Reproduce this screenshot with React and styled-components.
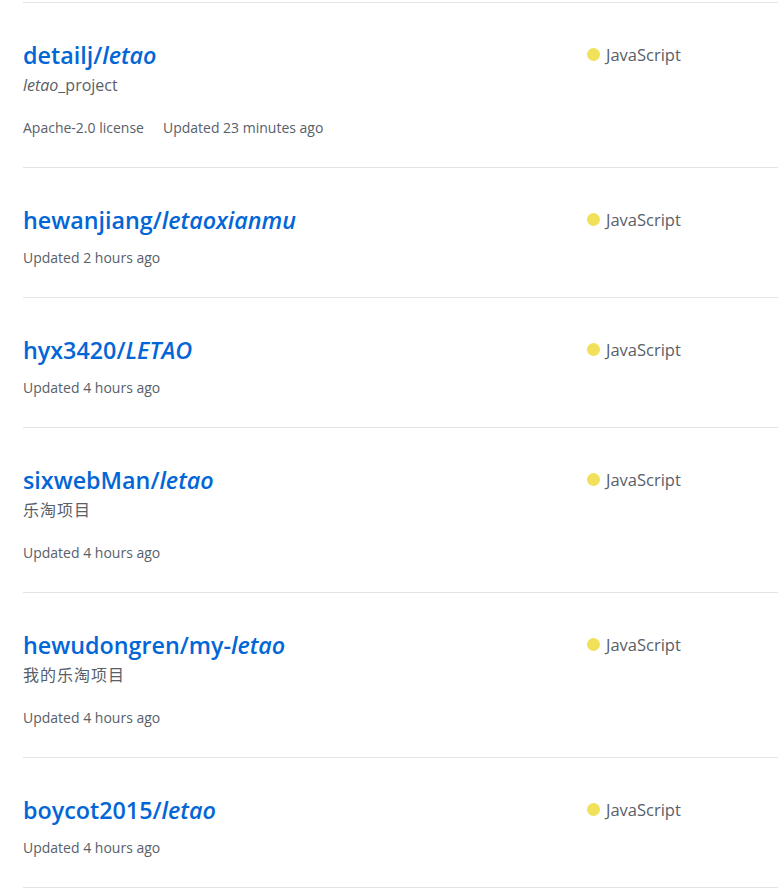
import React from "react";
import styled, { createGlobalStyle } from "styled-components";

const GlobalStyle = createGlobalStyle`
  html, body {
    margin: 0;
    padding: 0;
    background: #fff;
  }
  body {
    font-family: "Open Sans", "Noto Sans CJK SC", sans-serif;
    color: #24292e;
  }
`;

const repos = [
  {
    owner: "detailj",
    pre: "",
    name: "letao",
    desc: [{ t: "letao", em: true }, { t: "_project" }],
    license: "Apache-2.0 license",
    updated: "Updated 23 minutes ago",
  },
  { owner: "hewanjiang", pre: "", name: "letaoxianmu", updated: "Updated 2 hours ago" },
  { owner: "hyx3420", pre: "", name: "LETAO", updated: "Updated 4 hours ago" },
  {
    owner: "sixwebMan",
    pre: "",
    name: "letao",
    desc: [{ t: "乐淘项目" }],
    cjk: true,
    updated: "Updated 4 hours ago",
  },
  {
    owner: "hewudongren",
    pre: "my-",
    name: "letao",
    desc: [{ t: "我的乐淘项目" }],
    cjk: true,
    updated: "Updated 4 hours ago",
  },
  { owner: "boycot2015", pre: "", name: "letao", updated: "Updated 4 hours ago" },
];

export default function App() {
  return (
    <>
      <GlobalStyle />
      <List>
        {repos.map((r) => (
          <Item key={r.owner}>
            <Main>
              <Title>
                <a href="#repo">
                  {r.owner}/{r.pre}
                  <em>{r.name}</em>
                </a>
              </Title>
              {r.desc && (
                <Desc $cjk={r.cjk}>
                  {r.desc.map((d, i) => (d.em ? <em key={i}>{d.t}</em> : <span key={i}>{d.t}</span>))}
                </Desc>
              )}
              <Meta>
                {r.license && <span>{r.license}</span>}
                <span>{r.updated}</span>
              </Meta>
            </Main>
            <Lang>
              <Dot />
              JavaScript
            </Lang>
          </Item>
        ))}
      </List>
    </>
  );
}

const List = styled.ul`
  list-style: none;
  margin: 2px 0 0 23px;
  padding: 0;
  border-top: 1px solid #e1e4e8;
`;

const Item = styled.li`
  display: flex;
  padding: 37px 0 29px;
  border-bottom: 1px solid #e1e4e8;
`;

const Main = styled.div`
  width: 564px;
  flex: none;
  display: flex;
  flex-direction: column;
`;

const Title = styled.h3`
  margin: 0;
  font-size: 23.3px;
  font-weight: 600;
  line-height: 30px;

  a {
    color: #0366d6;
    text-decoration: none;
  }

  em {
    font-style: italic;
  }
`;

const Desc = styled.p`
  margin: 3px 0 8px;
  font-size: 16px;
  line-height: 24px;
  color: #586069;
  letter-spacing: ${(p) => (p.$cjk ? "1px" : "0")};
`;

const Meta = styled.div`
  margin-top: 13px;
  font-size: 14px;
  line-height: 20px;
  color: #586069;
  display: flex;
  gap: 19px;
`;

const Lang = styled.div`
  display: flex;
  align-items: center;
  gap: 6px;
  height: 28px;
  font-size: 16.5px;
  color: #586069;
`;

const Dot = styled.span`
  width: 13px;
  height: 13px;
  border-radius: 50%;
  background: #f1e05a;
`;
